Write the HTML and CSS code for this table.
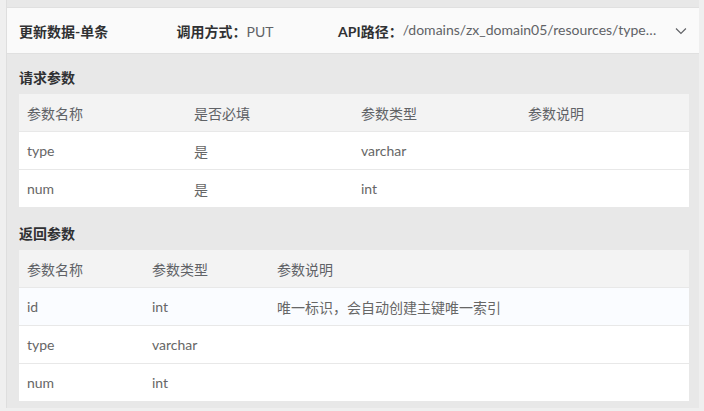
FILE: index.html
```html
<!DOCTYPE html>
<html lang="zh">
<head>
<meta charset="utf-8">
<link rel="stylesheet" href="styles.css">
</head>
<body>
<div class="panel">
  <div class="head">
    <div class="h-title">更新数据-单条</div>
    <div class="h-method"><b>调用方式：</b><span>PUT</span></div>
    <div class="h-path"><b>API路径：</b><span class="path">/domains/zx_domain05/resources/type/records/{id}</span></div>
    <svg class="chev" width="12" height="8" viewBox="0 0 12 8"><path d="M1 1.5 L6 6.5 L11 1.5" fill="none" stroke="#606266" stroke-width="1.2"/></svg>
  </div>
  <div class="body">
    <div class="sec-title">请求参数</div>
    <div class="tbl req">
      <div class="row th"><div>参数名称</div><div>是否必填</div><div>参数类型</div><div>参数说明</div></div>
      <div class="row"><div>type</div><div>是</div><div>varchar</div><div></div></div>
      <div class="row"><div>num</div><div>是</div><div>int</div><div></div></div>
    </div>
    <div class="sec-title second">返回参数</div>
    <div class="tbl res">
      <div class="row th"><div>参数名称</div><div>参数类型</div><div>参数说明</div></div>
      <div class="row hover"><div>id</div><div>int</div><div>唯一标识，会自动创建主键唯一索引</div></div>
      <div class="row"><div>type</div><div>varchar</div><div></div></div>
      <div class="row"><div>num</div><div>int</div><div></div></div>
    </div>
  </div>
</div>
</body>
</html>
```
FILE: styles.css
```css
html, body { margin: 0; padding: 0; }
body {
  background: #efefef;
  font-family: Lato, "Noto Sans CJK SC", sans-serif;
  font-size: 14px;
  color: #666;
  width: 704px;
  height: 411px;
  overflow: hidden;
}
.panel {
  margin: 0 5px 0 6px;
  background: #e8e8e8;
  padding-top: 7px;
  padding-bottom: 7px;
  border-left: 1px solid #dedede;
}
.head {
  height: 45px;
  background: #fafafa;
  border-top: 1px solid #e0e0e0;
  border-bottom: 1px solid #e0e0e0;
  display: flex;
  align-items: center;
  padding: 0 12px 0 12px;
}
.head b { font-weight: 700; color: #303133; }
.head span { color: #606266; }
.h-title { width: 159px; font-weight: 700; color: #303133; }
.h-method { width: 163px; }
.h-path { display: flex; width: 322px; white-space: nowrap; }
.path { overflow: hidden; text-overflow: ellipsis; }
.chev { margin-left: 15px; }
.body { padding: 0 10px 0 12px; }
.sec-title {
  height: 20px;
  line-height: 20px;
  margin-top: 14px;
  margin-bottom: 6px;
  font-weight: 700;
  color: #303133;
}
.sec-title.second { margin-top: 17px; }
.tbl { background: #fff; }
.row {
  display: grid;
  height: 37px;
  align-items: center;
  border-bottom: 1px solid #e8e8e8;
}
.row:last-child { border-bottom: none; }
.req .row { grid-template-columns: 167px 167px 167px 1fr; }
.res .row { grid-template-columns: 125px 125px 1fr; }
.row > div { padding-left: 8px; white-space: nowrap; }
.th { background: #f3f3f3; color: #606266; }
.hover { background: #fafcff; }
```
